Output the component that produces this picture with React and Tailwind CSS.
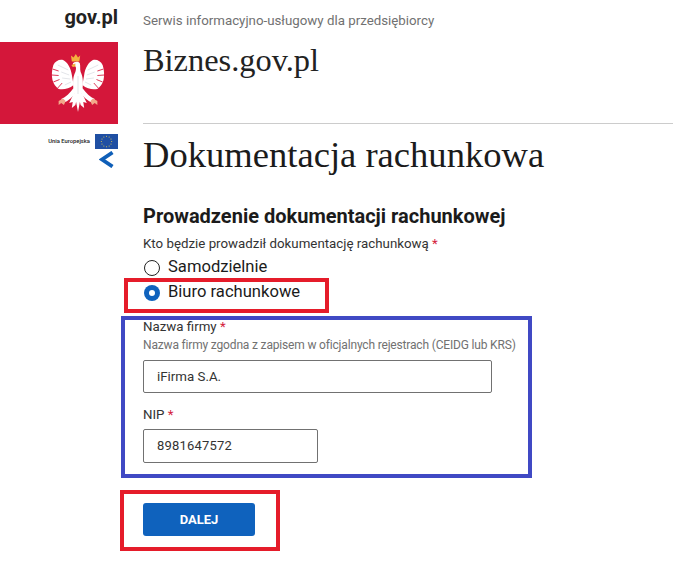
const serif = "font-['Liberation_Serif',serif]";

function EagleHalf() {
  return (
    <g>
      {/* wing */}
      <path d="M34 27 C33 20 29 14 24 12 C20 11 15 13 13 17 C11 22 11 28 12 32 C13 36 16 39 19 41 C24 42 31 41 36 37 Z" fill="#fff" />
      <g stroke="#d4173a" strokeWidth="0.900" fill="none">
        <path d="M12 21 L19 23 M11 27 L19 27.500 M13 34 L20 31.500 M18 40 L23 35" />
      </g>
      <g stroke="#d9dce2" strokeWidth="0.800" fill="none">
        <path d="M30 22 L18 17 M31 27 L22 24 M32 31 L23 30 M33 34 L26 37" />
      </g>
      {/* leg and talons */}
      <path d="M36 40 C32 45 27 49 22 51 L24 55 C30 53 35 49 38 45 Z" fill="#fff" />
      <path d="M19 53 L24 50.500 L27 53 L25 57 L22 55 L19 57 Z" fill="#f2a98a" />
      {/* tail lobe */}
      <path d="M36 46 L31 55 L35 54 L34 60 L38 57 L41 46 Z" fill="#fff" />
    </g>
  );
}

function Eagle() {
  return (
    <svg viewBox="0 0 70 70" className="h-[70px] w-[70px]">
      <g transform="translate(41 0) scale(0.88 1) translate(-41 0)">
        <EagleHalf />
        <g transform="matrix(-1 0 0 1 82 0)">
          <EagleHalf />
        </g>
        {/* crown */}
        <path d="M34 13.500 L33 7.500 L36 9.500 L38.500 6 L41 9.500 L43.500 7.500 L42.500 13.500 Z" fill="#f4b23f" />
        {/* head, neck, body */}
        <path d="M35 16 C36 13.500 41 13 43 15 C44 18 43 21 44 24 C47 29 47 36 46 42 L44 50 L41 64 L38 50 L36 42 C35 35 35 29 38 24 C39 21 39 19 38 18.500 Z" fill="#fff" />
        <path d="M38 15.500 L33.500 17 L35 19 L38 18.500 Z" fill="#f4b23f" />
        <path d="M41 28 L41 46" stroke="#d9dce2" strokeWidth="0.800" fill="none" />
      </g>
    </svg>
  );
}

function EuFlag() {
  const stars = Array.from({ length: 12 }, (_, i) => {
    const a = (i * Math.PI) / 6;
    return [11.5 + 5.2 * Math.cos(a), 7.5 + 5.2 * Math.sin(a)];
  });
  return (
    <svg viewBox="0 0 23 15" className="h-[15px] w-[23px]">
      <rect width="23" height="15" fill="#1f4fa3" />
      {stars.map(([cx, cy], i) => (
        <circle key={i} cx={cx} cy={cy} r="0.5" fill="#f6d84a" />
      ))}
    </svg>
  );
}

function Required() {
  return <span className="text-[#d4213d]"> *</span>;
}

function Radio({ checked, label }) {
  return (
    <div className="flex h-[25px] items-center gap-2 pl-px">
      {checked ? (
        <span className="flex h-4 w-4 items-center justify-center rounded-full bg-[#0f62bd]">
          <span className="h-[6px] w-[6px] rounded-full bg-white" />
        </span>
      ) : (
        <span className="h-4 w-4 rounded-full border border-[#222]" />
      )}
      <span className="text-[16.6px] leading-none text-[#1b1b1b]">{label}</span>
    </div>
  );
}

export default function App() {
  return (
    <div className="relative h-[582px] w-[673px] overflow-hidden bg-white font-['Roboto',sans-serif] text-[#1b1b1b]">
      <div className="flex">
        <aside className="w-[118px] shrink-0">
          <div className="flex h-[42px] items-start justify-end">
            <span className="mt-[5px] text-xl leading-6 font-bold text-[#222]">gov.pl</span>
          </div>
          <div className="flex h-[82px] items-center justify-center bg-[#d4173a] pl-[25px]">
            <Eagle />
          </div>
          <div className="mt-[10px] flex items-center justify-end gap-[5px]">
            <span className="text-[5.8px] leading-none font-medium text-[#222]">Unia Europejska</span>
            <EuFlag />
          </div>
          <div className="flex justify-end pt-[2px] pr-[4px]">
            <svg viewBox="0 0 15 17" className="h-[17px] w-[15px]">
              <path d="M13.500 1.500 L3 8.500 L13.500 15.500" fill="none" stroke="#0f5fb8" strokeWidth="3.800" />
            </svg>
          </div>
        </aside>
        <main className="ml-[25px] flex-1">
          <p className="pt-[13px] text-[13.3px] leading-[15px] text-[#717171]">Serwis informacyjno-usługowy dla przedsiębiorcy</p>
          <h2 className={`${serif} mt-[12px] text-[32.4px] leading-10 text-[#222]`}>Biznes.gov.pl</h2>
          <div className="mt-[43px] border-t border-[#ccc]" />
          <h1 className={`${serif} mt-[9px] text-[36.6px] leading-[44px] text-[#1b1b1b]`}>Dokumentacja rachunkowa</h1>
          <h3 className="mt-[27px] text-xl leading-6 font-bold text-[#1b1b1b]">Prowadzenie dokumentacji rachunkowej</h3>
          <p className="mt-2 text-[13.3px] leading-4 text-[#333]">
            Kto będzie prowadził dokumentację rachunkową
            <Required />
          </p>
          <div className="mt-[3px]">
            <Radio label="Samodzielnie" />
            <Radio checked label="Biuro rachunkowe" />
          </div>
          <div className="mt-[14px] text-[13.3px] leading-4 text-[#333]">
            Nazwa firmy
            <Required />
          </div>
          <p className="mt-[3px] text-xs leading-[15px] tracking-[-0.17px] text-[#717171]">Nazwa firmy zgodna z zapisem w oficjalnych rejestrach (CEIDG lub KRS)</p>
          <div className="mt-[7px] flex h-[33px] w-[349px] items-center rounded-[2px] border border-[#717171] px-[13px] text-[13.3px] text-[#333]">iFirma S.A.</div>
          <div className="mt-[14px] text-[13.3px] leading-4 text-[#333]">
            NIP
            <Required />
          </div>
          <div className="mt-[6px] flex h-[34px] w-[175px] items-center rounded-[2px] border border-[#717171] px-[13px] text-[13px] tracking-[0.2px] text-[#333]">8981647572</div>
          <button className="mt-10 block h-[33px] w-[112px] rounded-[3px] bg-[#0f62bd] text-[13px] font-bold text-white">DALEJ</button>
        </main>
      </div>

      {/* annotation frames drawn over the form */}
      <div className="absolute top-[278px] left-[124px] h-[35px] w-[205px] border-4 border-[#e51c2a]" />
      <div className="absolute top-[316px] left-[121px] h-[162px] w-[411px] border-4 border-[#4049c4]" />
      <div className="absolute top-[490px] left-[120px] h-[61px] w-[160px] border-4 border-[#e51c2a]" />
    </div>
  );
}
